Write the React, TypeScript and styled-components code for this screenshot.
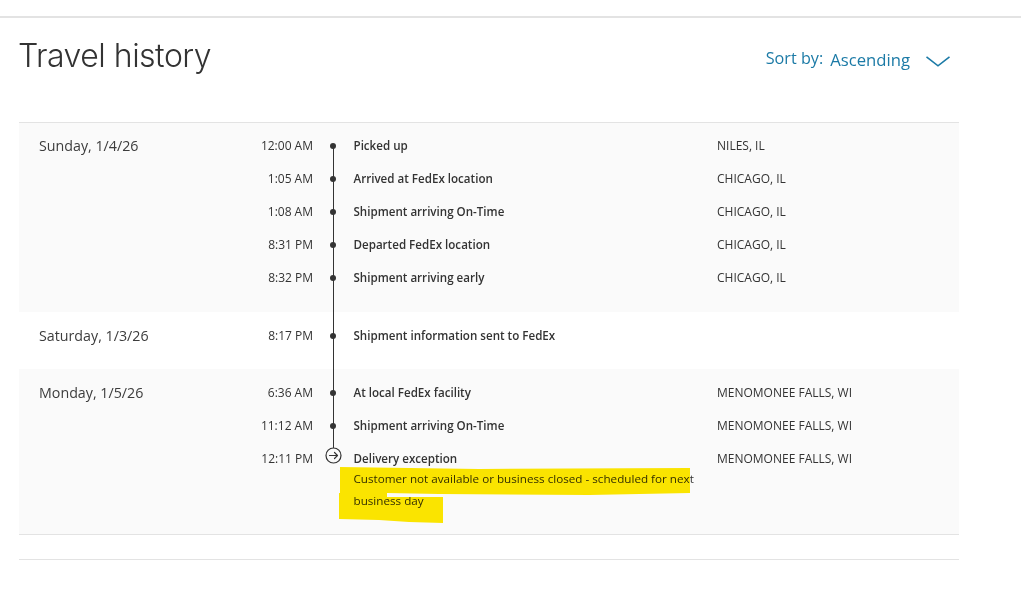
import React from "react";
import styled, { createGlobalStyle } from "styled-components";

const Global = createGlobalStyle`
  html, body { margin: 0; padding: 0; background: #fff; }
  body { font-family: "Open Sans", "Liberation Sans", sans-serif; color: #333; }
`;

const Page = styled.div`
  width: 1021px;
  height: 589px;
  overflow: hidden;
  padding-top: 16px;
  box-sizing: border-box;
`;
const TopRule = styled.div`
  height: 2px;
  background: #e3e3e3;
`;
const Section = styled.section`
  width: 940px;
  margin-left: 19px;
`;
const Header = styled.header`
  height: 104px;
  display: flex;
  justify-content: space-between;
  align-items: flex-start;
`;
const Title = styled.h1`
  margin: 18px 0 0 -1px;
  font-family: Inter, "Open Sans", sans-serif;
  font-size: 32px;
  line-height: 40px;
  font-weight: 300;
  letter-spacing: -0.5px;
  color: #333;
`;
const Sort = styled.div`
  display: flex;
  align-items: flex-start;
  margin: 29px 9px 0 0;
  color: #1b7aa6;
`;
const SortLabel = styled.span`
  font-size: 16.2px;
  line-height: 22px;
`;
const SortValue = styled.span`
  font-size: 16.7px;
  line-height: 22px;
  margin: 2px 16px 0 7px;
`;
const Chevron = styled.svg`
  width: 24px;
  height: 11px;
  margin-top: 9px;
`;
const History = styled.div`
  position: relative;
  border-top: 1px solid #e3e3e3;
  border-bottom: 1px solid #e3e3e3;
`;
const Line = styled.div`
  position: absolute;
  left: 313.5px;
  top: 22px;
  height: 307px;
  width: 1.5px;
  background: #333;
`;
const Group = styled.div<{ $shade: boolean; $top: number; $bottom: number }>`
  display: grid;
  grid-template-columns: 220px 1fr;
  background: ${(p) => (p.$shade ? "#fafafa" : "#fff")};
  padding: ${(p) => p.$top}px 0 ${(p) => p.$bottom}px;
`;
const DateLabel = styled.div`
  padding: 6px 0 0 20px;
  font-size: 14.25px;
  line-height: 22px;
  color: #3c3c3c;
`;
const Row = styled.div`
  display: grid;
  grid-template-columns: 74px 40px 364px 1fr;
  height: 33px;
  align-items: center;
`;
const Time = styled.div`
  text-align: right;
  font-size: 12px;
  margin-bottom: 1px;
`;
const Marker = styled.div`
  display: flex;
  justify-content: center;
  position: relative;
`;
const Dot = styled.span`
  width: 6px;
  height: 6px;
  border-radius: 50%;
  background: #333;
`;
const ArrowIcon = styled.svg`
  position: relative;
  top: -3px;
  width: 17px;
  height: 17px;
  margin: -2px 0;
`;
const Event = styled.div`
  font-size: 11.6px;
  font-weight: 600;
  padding-left: 0.5px;
  margin-bottom: 1px;
`;
const Location = styled.div`
  font-size: 12px;
  margin-bottom: 1px;
`;
const Note = styled.div`
  position: relative;
  width: 345px;
  margin: -7px 0 0 114px;
  padding-left: 0.5px;
  font-size: 11.68px;
  line-height: 21.5px;
`;
const Highlight = styled.svg`
  position: absolute;
  left: -14px;
  top: -1px;
  width: 353px;
  height: 57px;
  mix-blend-mode: multiply;
  pointer-events: none;
`;
const FootRule = styled.div`
  height: 1px;
  margin-top: 24px;
  background: #e3e3e3;
`;

type Stop = { time: string; event: string; place?: string };

const Sunday: Stop[] = [
  { time: "12:00 AM", event: "Picked up", place: "NILES, IL" },
  { time: "1:05 AM", event: "Arrived at FedEx location", place: "CHICAGO, IL" },
  { time: "1:08 AM", event: "Shipment arriving On-Time", place: "CHICAGO, IL" },
  { time: "8:31 PM", event: "Departed FedEx location", place: "CHICAGO, IL" },
  { time: "8:32 PM", event: "Shipment arriving early", place: "CHICAGO, IL" },
];
const Monday: Stop[] = [
  { time: "6:36 AM", event: "At local FedEx facility", place: "MENOMONEE FALLS, WI" },
  { time: "11:12 AM", event: "Shipment arriving On-Time", place: "MENOMONEE FALLS, WI" },
];

const StopRow = ({ stop, last }: { stop: Stop; last?: boolean }) => (
  <Row>
    <Time>{stop.time}</Time>
    <Marker>
      {last ? (
        <ArrowIcon viewBox="0 0 17 17" fill="#fafafa" stroke="#333" strokeWidth="1.2">
          <circle cx="8.5" cy="8.5" r="7.5" />
          <path d="M4.5 8.5h8M9.5 5.5l3 3-3 3" fill="none" strokeLinecap="round" strokeLinejoin="round" />
        </ArrowIcon>
      ) : (
        <Dot />
      )}
    </Marker>
    <Event>{stop.event}</Event>
    <Location>{stop.place}</Location>
  </Row>
);

export default function App() {
  return (
    <Page>
      <Global />
      <TopRule />
      <Section>
        <Header>
          <Title>Travel history</Title>
          <Sort>
            <SortLabel>Sort by:</SortLabel>
            <SortValue>Ascending</SortValue>
            <Chevron viewBox="0 0 24 11" fill="none" stroke="#1b7aa6" strokeWidth="1.6">
              <path d="M0.5 0.8L12 9.8L23.5 0.8" />
            </Chevron>
          </Sort>
        </Header>
        <History>
          <Line />
          <Group $shade $top={6} $bottom={18}>
            <DateLabel>Sunday, 1/4/26</DateLabel>
            <div>
              {Sunday.map((s) => (
                <StopRow key={s.time} stop={s} />
              ))}
            </div>
          </Group>
          <Group $shade={false} $top={7} $bottom={17}>
            <DateLabel>Saturday, 1/3/26</DateLabel>
            <div>
              <StopRow stop={{ time: "8:17 PM", event: "Shipment information sent to FedEx" }} />
            </div>
          </Group>
          <Group $shade $top={7} $bottom={23}>
            <DateLabel>Monday, 1/5/26</DateLabel>
            <div>
              {Monday.map((s) => (
                <StopRow key={s.time} stop={s} />
              ))}
              <StopRow last stop={{ time: "12:11 PM", event: "Delivery exception", place: "MENOMONEE FALLS, WI" }} />
              <Note>
                Customer not available or business closed - scheduled for next business day
                <Highlight viewBox="0 0 353 57">
                  <path
                    d="M1 0L140 2L351 1V26L250 28L100 27L48 26V30L104 30V56L70 55L40 53L0 52V26L1 26Z"
                    fill="#ffe900"
                  />
                </Highlight>
              </Note>
            </div>
          </Group>
        </History>
        <FootRule />
      </Section>
    </Page>
  );
}
